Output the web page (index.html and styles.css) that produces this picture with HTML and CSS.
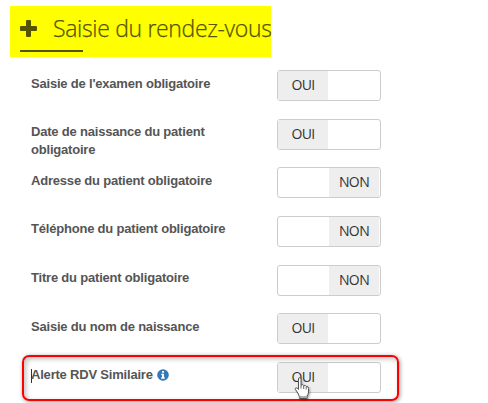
FILE: index.html
```
<!DOCTYPE html>
<html lang="fr">
<head>
    <meta charset="UTF-8">
    <title>Saisie du rendez-vous</title>
    <link rel="stylesheet" href="styles.css">
</head>
<body>
    <h2 class="title">
        <svg class="plus" width="17" height="17" viewBox="0 0 17 17"><path d="M7 0h3q1 0 1 1v5h5q1 0 1 1v3q0 1-1 1h-5v5q0 1-1 1h-3q-1 0-1-1v-5h-5q-1 0-1-1v-3q0-1 1-1h5v-5q0-1 1-1z"/></svg>
        <span class="title-text">Saisie du rendez-vous</span>
    </h2>

    <div class="options">
        <div class="row">
            <label>Saisie de l'examen obligatoire</label>
            <div class="switch"><span class="on">OUI</span></div>
        </div>
        <div class="row">
            <label>Date de naissance du patient obligatoire</label>
            <div class="switch"><span class="on">OUI</span></div>
        </div>
        <div class="row">
            <label>Adresse du patient obligatoire</label>
            <div class="switch"><span class="off">NON</span></div>
        </div>
        <div class="row">
            <label>Téléphone du patient obligatoire</label>
            <div class="switch"><span class="off">NON</span></div>
        </div>
        <div class="row">
            <label>Titre du patient obligatoire</label>
            <div class="switch"><span class="off">NON</span></div>
        </div>
        <div class="row">
            <label>Saisie du nom de naissance</label>
            <div class="switch"><span class="on">OUI</span></div>
        </div>
        <div class="row last">
            <label>Alerte RDV Similaire
                <svg class="info" width="12" height="12" viewBox="0 0 12 12"><circle cx="6" cy="6" r="5.8" fill="#337ab7"/><path d="M5 2h2v1.7H5zM4.2 4.7H7v3.6h.8v1.4H4.2V8.3H5V6h-.8z" fill="#fff"/></svg>
            </label>
            <div class="switch"><span class="on">OUI</span></div>
            <div class="highlight"></div>
            <div class="caret"></div>
            <svg class="cursor" width="17" height="23" viewBox="0 0 17 23">
                <path d="M4.500 2q0-1.300 1.200-1.300T7 2v6q2.300-.9 2.700.6 2-.6 2.500.9 2.300-.3 2.300 2v3.500q0 2-1.500 4.500v2H5.500v-1.500Q5 18 3.800 16 2.500 13.700 1.400 12.500q-.5-1.500.7-1.700 1.200 0 2.400 1.700z" fill="#fff" stroke="#555" stroke-width="1"/>
                <path d="M7 8v3.500M9.700 9v3M12.200 10v2.500" fill="none" stroke="#555" stroke-width=".9"/>
                <path d="M5.500 18.500q4 1.500 7.500 0v2.500H5.500z" fill="#aaa"/>
            </svg>
        </div>
    </div>
</body>
</html>
```
FILE: styles.css
```
* {
    box-sizing: border-box;
}

body {
    margin: 0;
    padding: 6px 0 0 10px;
    height: 403px;
    overflow: hidden;
    background-color: #fff;
    color: #555;
    font-family: "Liberation Sans", Arial, sans-serif;
}

.title {
    position: relative;
    display: flex;
    align-items: center;
    gap: 16px;
    width: 261px;
    height: 51px;
    margin: 0 0 13px;
    padding: 0 0 6px 10px;
    background-color: #ff0;
    color: #555500;
    font-family: "Open Sans", sans-serif;
    font-size: 23px;
    font-weight: 300;
    letter-spacing: -.33px;
    white-space: nowrap;
    -webkit-text-stroke: .25px #555500;
}

.title::after {
    content: "";
    position: absolute;
    left: 10px;
    bottom: 5px;
    width: 63px;
    height: 2px;
    background-color: #555500;
}

.title-text {
    position: relative;
    top: -1px;
}

.plus {
    flex: none;
    fill: #555500;
}

.row {
    position: relative;
    display: flex;
    align-items: flex-start;
    height: 48.67px;
    padding-left: 21px;
}

label {
    width: 246px;
    padding: 4.500px 30px 0 0;
    font-size: 13px;
    font-weight: bold;
    letter-spacing: -.2px;
    line-height: 18px;
}

.switch {
    display: flex;
    width: 104px;
    height: 31px;
    padding-right: 1px;
    border: 1px solid #ccc;
    border-radius: 3px;
    background-color: #fff;
    color: #333;
    font-family: "Open Sans", sans-serif;
    font-size: 14px;
    letter-spacing: -.6px;
    line-height: 28px;
    text-align: center;
}

.on,
.off {
    width: 50px;
    background-color: #eee;
}

.off {
    margin-left: auto;
}

.info {
    margin-left: 1px;
    vertical-align: -2px;
}

/* frame drawn over the last option */
.highlight {
    position: absolute;
    left: 12px;
    top: -7px;
    width: 377px;
    height: 46px;
    border: 2px solid #f00;
    border-radius: 7px;
    box-shadow: 1px 1px 4px rgba(0, 0, 0, .4), inset 2px 2px 5px rgba(0, 0, 0, .25);
}

.caret {
    position: absolute;
    left: 21px;
    top: 7px;
    width: 1px;
    height: 14px;
    background-color: #333;
}

.cursor {
    position: absolute;
    left: 284px;
    top: 15px;
    filter: drop-shadow(1px 1px 1px rgba(0, 0, 0, .35));
}
```
